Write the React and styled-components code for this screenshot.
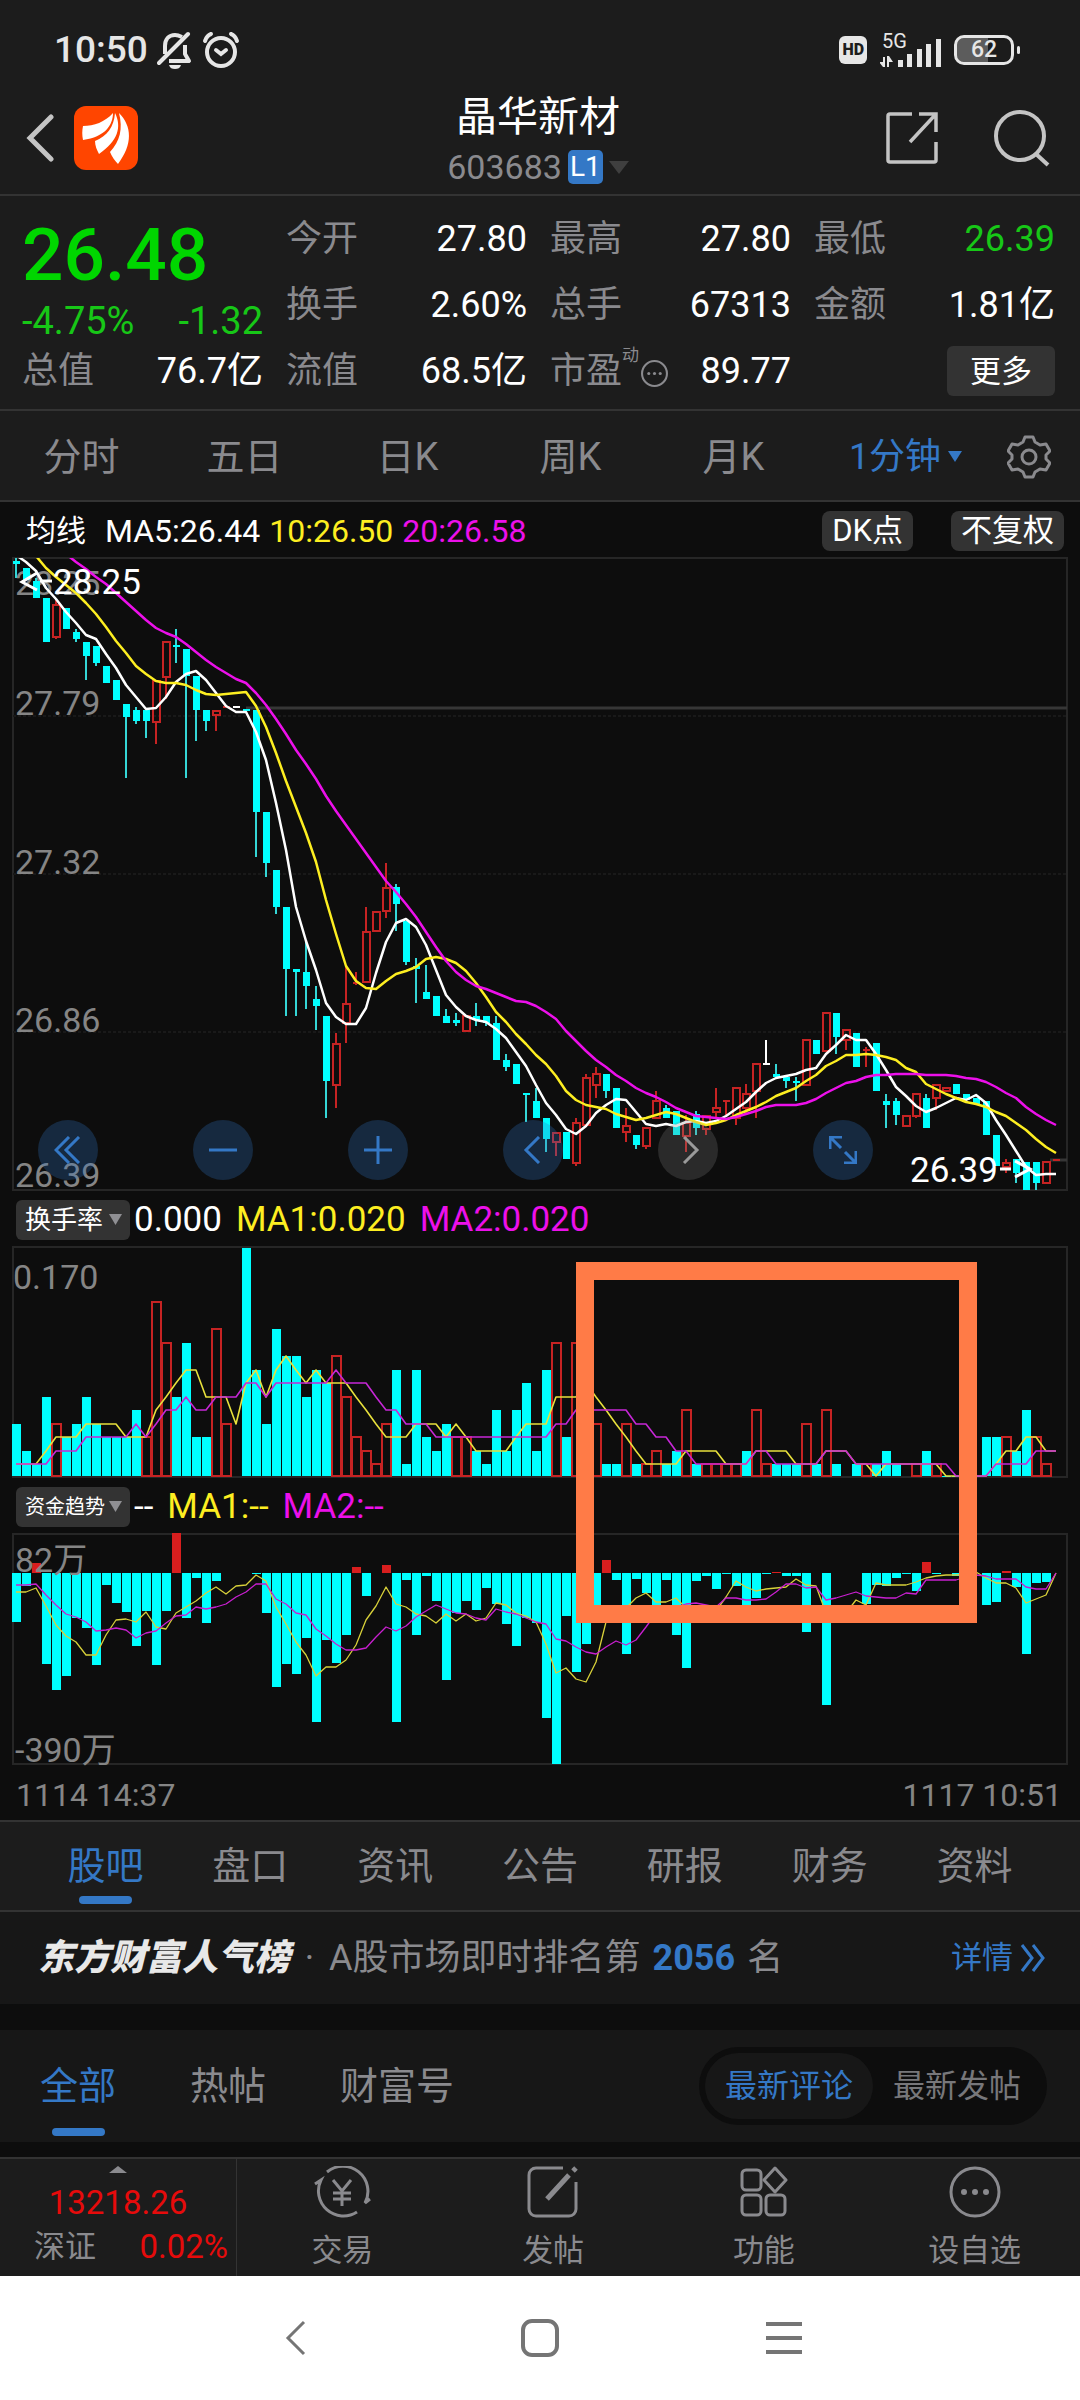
import React, { useState } from "react";
import styled, { createGlobalStyle } from "styled-components";

const C = {
  bar: "#1c1c1c",
  card: "#171717",
  ink: "#0d0d0d",
  line: "#333333",
  chip: "#333333",
  muted: "#8a8a8e",
  axis: "#858585",
  white: "#ffffff",
  green: "#00d600",
  greenSoft: "#17c717",
  red: "#e60b0b",
  blue: "#3478c6",
  cyan: "#00ffff",
  cyanWick: "#35d6d6",
  candleRed: "#c62323",
  barRed: "#d81e1e",
  yellow: "#fdee21",
  magenta: "#ec10ea",
  mark: "#ff7b47",
};

const Global = createGlobalStyle`
  *, *::before, *::after { box-sizing: border-box; }
  body {
    margin: 0;
    background: #ffffff;
    font-family: Roboto, "Noto Sans CJK SC", sans-serif;
  }
  button, select { font-family: inherit; }
`;

const Page = styled.div`
  background: ${C.ink};
  color: ${C.white};
`;

const PlainButton = styled.button`
  display: inline-flex;
  align-items: center;
  justify-content: center;
  margin: 0;
  padding: 0;
  border: 0;
  background: none;
  color: inherit;
  line-height: 1;
  white-space: nowrap;
  cursor: pointer;
`;

/* ---------- status bar ---------- */

const StatusBar = styled.div`
  display: flex;
  align-items: center;
  justify-content: space-between;
  height: 92px;
  padding: 8px 60px 0 54px;
  background: ${C.bar};
  color: #e6e6e6;
`;

const StatusGroup = styled.div`
  display: flex;
  align-items: center;
  gap: ${(p) => p.$gap}px;
`;

const Clock = styled.time`
  font-size: 37px;
  font-weight: 500;
  line-height: 40px;
`;

const HdBadge = styled.span`
  padding: 0 3px;
  border-radius: 6px;
  background: #e6e6e6;
  color: ${C.bar};
  font-size: 16px;
  font-weight: 900;
  line-height: 28px;
`;

const Signal = styled.div`
  display: grid;
  width: 61px;
  height: 34px;
  font-size: 20px;
  line-height: 17px;

  > * { grid-area: 1 / 1; }
  span { padding-left: 2px; }
`;

const Battery = styled.div`
  display: flex;
  align-items: center;
  gap: 3px;

  &::after {
    content: "";
    width: 3px;
    height: 8px;
    border-radius: 2px;
    background: #e6e6e6;
  }
`;

const BatteryCell = styled.span`
  width: 60px;
  border: 3px solid #e6e6e6;
  border-radius: 10px;
  background: linear-gradient(90deg, #5c5c5c 0 58%, ${C.bar} 58%);
  background-clip: padding-box;
  font-size: 23px;
  font-weight: 500;
  line-height: 24px;
  text-align: center;
`;

/* ---------- header ---------- */

const Header = styled.header`
  display: grid;
  grid-template-columns: 1fr auto 1fr;
  align-items: center;
  height: 104px;
  padding: 0 30px 10px 26px;
  border-bottom: 2px solid ${C.line};
  background: ${C.bar};
`;

const HeaderSide = styled.div`
  display: flex;
  align-items: center;
  justify-content: ${(p) => (p.$end ? "flex-end" : "flex-start")};
  gap: ${(p) => (p.$end ? 56 : 20)}px;
  color: #c4c4c4;
`;

const TitleBlock = styled.div`
  display: grid;
  justify-items: center;
  gap: 12px;
  padding-top: 4px;
`;

const StockName = styled.h1`
  margin: 0;
  font-size: 41px;
  font-weight: 400;
  line-height: 42px;
`;

const StockCode = styled.button`
  display: flex;
  align-items: center;
  gap: 6px;
  padding: 0;
  border: 0;
  background: none;
  color: ${C.muted};
  font-size: 34px;
  line-height: 34px;
`;

const Level = styled.span`
  padding: 0 2px;
  border-radius: 5px;
  background: ${C.blue};
  color: ${C.white};
  font-size: 28px;
`;

/* ---------- quote ---------- */

const Quote = styled.section`
  display: grid;
  grid-template-columns: repeat(4, 1fr);
  column-gap: 23px;
  padding: 10px 25px 5px 22px;
  border-bottom: 2px solid ${C.line};
  background: ${C.bar};
`;

const QuoteColumn = styled.div`
  display: grid;
  grid-template-rows: ${(p) => (p.$lead ? "98px 34px 66px" : "repeat(3, 66px)")};
`;

const Price = styled.div`
  align-self: center;
  color: ${C.green};
  font-size: 73px;
  font-weight: 500;
  line-height: 80px;
`;

const Change = styled.div`
  display: flex;
  align-items: center;
  justify-content: space-between;
  color: ${C.greenSoft};
  font-size: 38px;
  line-height: 34px;
`;

const Stat = styled.div`
  display: flex;
  align-items: center;
  justify-content: space-between;
  color: ${(p) => p.$color || C.white};
  font-size: 36px;
  line-height: 40px;
`;

const StatLabel = styled.span`
  display: flex;
  align-items: center;
  color: ${C.muted};

  sup {
    align-self: flex-start;
    font-size: 17px;
    line-height: 8px;
  }

  svg { margin: 4px 0 0 2px; }
`;

const MoreButton = styled(PlainButton)`
  align-self: center;
  justify-self: end;
  height: 50px;
  padding: 0 23px;
  border-radius: 6px;
  background: ${C.chip};
  font-size: 31px;
`;

/* ---------- period tabs ---------- */

const PeriodTabs = styled.nav`
  display: grid;
  grid-template-columns: repeat(6, 163fr) 102fr;
  height: 91px;
  border-bottom: 2px solid ${C.line};
  background: ${C.bar};
`;

const PeriodTab = styled(PlainButton)`
  gap: 7px;
  padding: 2px 0 0 ${(p) => (p.$menu ? 18 : 0)}px;
  color: ${(p) => (p.$active ? C.blue : C.muted)};
  font-size: ${(p) => (p.$menu ? 36 : 38)}px;
`;

/* ---------- charts ---------- */

const Charts = styled.main`
  background: ${C.ink};
`;

const Legend = styled.div`
  display: flex;
  align-items: center;
  gap: ${(p) => p.$gap || 14}px;
  height: 55px;
  padding: 2px 16px 0;
  font-size: ${(p) => p.$size || 35}px;
  line-height: 40px;
  white-space: nowrap;
`;

const Reading = styled.span`
  color: ${(p) => p.$color || C.white};
`;

const LegendTitle = styled.span`
  margin: 0 10px;
  font-size: 30px;
`;

const LegendActions = styled.div`
  display: flex;
  gap: 38px;
  margin-left: auto;
`;

const Chip = styled(PlainButton)`
  height: 40px;
  padding: 0 10px;
  border-radius: 8px;
  background: ${C.chip};
  font-size: 31px;
`;

const Picker = styled.label`
  display: grid;
  grid-template-columns: 1fr 21px;
  align-items: center;
  width: 114px;
  margin-right: -10px;

  svg {
    grid-area: 1 / 2;
    pointer-events: none;
  }
`;

const PickerSelect = styled.select`
  grid-area: 1 / 1 / 2 / 3;
  width: 100%;
  height: 40px;
  padding: 0 0 0 ${(p) => (p.$tight ? 9 : 9)}px;
  border: 0;
  border-radius: 6px;
  background: ${C.chip};
  color: ${C.white};
  font-size: ${(p) => (p.$tight ? 20 : 26)}px;
  appearance: none;
`;

const Stage = styled.div`
  position: relative;
  margin: 0 12px;

  > svg {
    display: block;
    width: 100%;
    height: auto;
    overflow: visible;
  }
`;

const Controls = styled.div`
  position: absolute;
  bottom: 11px;
  left: 26px;
  display: flex;
  gap: 95px;
`;

const RoundButton = styled(PlainButton)`
  width: 60px;
  height: 60px;
  border-radius: 50%;
  background: ${(p) => (p.$off ? "rgba(133, 133, 133, 0.25)" : "rgba(47, 116, 195, 0.28)")};
  color: ${(p) => (p.$off ? "#9a9a9a" : "#3478c6")};
`;

const Indicators = styled.div`
  position: relative;
`;

const Highlight = styled.div`
  position: absolute;
  top: 71px;
  left: 576px;
  width: 401px;
  height: 361px;
  border: 18px solid ${C.mark};
  pointer-events: none;
`;

const DateRow = styled.div`
  display: flex;
  align-items: center;
  justify-content: space-between;
  height: 55px;
  padding: 4px 18px 0 16px;
  color: ${C.axis};
  font-size: 32px;
`;

const AxisText = styled.text`
  fill: ${(p) => p.$fill || C.axis};
  font-size: ${(p) => p.$size || 34}px;
`;

/* ---------- sections below the charts ---------- */

const SectionTabs = styled.nav`
  display: grid;
  grid-template-columns: repeat(7, 1fr);
  height: 92px;
  padding: 0 33px;
  border-top: 2px solid ${C.line};
  border-bottom: 2px solid ${C.line};
  background: ${C.bar};
`;

const UnderlineTab = styled(PlainButton)`
  flex-direction: column;
  justify-content: flex-end;
  gap: ${(p) => p.$gap}px;
  padding-bottom: 6px;
  color: ${(p) => (p.$active ? C.blue : C.muted)};
  font-size: 38px;

  &::after {
    content: "";
    width: 53px;
    height: 8px;
    border-radius: 4px;
    background: ${(p) => (p.$active ? C.blue : "transparent")};
  }
`;

const RankBar = styled.section`
  display: flex;
  align-items: center;
  height: 92px;
  padding: 0 35px 0 38px;
  background: ${C.card};
  color: ${C.muted};
  font-size: 36px;
  line-height: 40px;
  white-space: nowrap;
`;

const RankTitle = styled.strong`
  color: #e8e8e8;
  font-style: italic;
  font-weight: 900;
`;

const Dot = styled.span`
  width: 39px;
  text-align: center;
`;

const RankNumber = styled.b`
  margin: 0 12px;
  color: ${C.blue};
`;

const DetailLink = styled.a`
  display: flex;
  align-items: center;
  gap: 7px;
  margin-left: auto;
  color: ${C.blue};
  font-size: 31px;
  text-decoration: none;
`;

const PostFilter = styled.section`
  display: flex;
  gap: 74px;
  height: 112px;
  margin: 26px 0 15px;
  padding: 0 33px 0 40px;
  background: ${C.card};
`;

const Toggle = styled.div`
  display: flex;
  align-self: center;
  margin-left: auto;
  padding: 6px;
  border-radius: 40px;
  background: ${C.ink};
`;

const ToggleButton = styled(PlainButton)`
  height: 66px;
  padding: 0 20px;
  border-radius: 33px;
  background: ${(p) => (p.$active ? C.card : "transparent")};
  color: ${(p) => (p.$active ? C.blue : "#77777a")};
  font-size: 32px;
`;

/* ---------- bottom ---------- */

const BottomBar = styled.nav`
  display: grid;
  grid-template-columns: 237px repeat(4, 1fr);
  height: 119px;
  border-top: 2px solid ${C.line};
  background: ${C.bar};
  color: ${C.muted};
`;

const IndexCell = styled.button`
  display: flex;
  flex-direction: column;
  align-items: center;
  gap: 10px;
  padding: 7px 8px 0 34px;
  border: 0;
  border-right: 1px solid ${C.line};
  background: none;
  color: ${C.red};
  font-size: 33px;
  line-height: 34px;
`;

const IndexValue = styled.span`
  display: grid;
  justify-items: center;
  gap: 13px;
  margin-right: 26px;
`;

const IndexRow = styled.span`
  display: flex;
  justify-content: space-between;
  width: 100%;
`;

const IndexName = styled.span`
  color: ${C.muted};
  font-size: 31px;
`;

const NavItem = styled(PlainButton)`
  flex-direction: column;
  justify-content: flex-start;
  gap: 17px;
  padding-top: 7px;
  font-size: 31px;
`;

const SystemBar = styled.div`
  display: flex;
  align-items: center;
  justify-content: center;
  gap: 206px;
  height: 124px;
  background: ${C.white};
  color: #757575;
`;

/* ---------- drawings ---------- */

const Line = ({ w, h = w, box, sw = 3, children, ...rest }) => (
  <svg
    width={w}
    height={h}
    viewBox={box || `0 0 ${w} ${h}`}
    fill="none"
    stroke="currentColor"
    strokeWidth={sw}
    aria-hidden="true"
    {...rest}
  >
    {children}
  </svg>
);

const Triangle = ({ w, h, color, up }) => (
  <svg width={w} height={h} viewBox="0 0 10 10" preserveAspectRatio="none" aria-hidden="true">
    <path d={up ? "M0 10h10L5 0z" : "M0 0h10L5 10z"} fill={color} />
  </svg>
);

const BellOff = () => (
  <Line w={36} h={38} sw={4}>
    <path d="M8 23v-8C8 8 12 4 18 4c3 0 5 1 7 2M28 14v9l4 7H12" strokeLinejoin="round" />
    <path d="M2 32 31 3" strokeLinecap="round" />
    <path d="M12 34h12c-1 3-3 4-6 4s-5-1-6-4z" fill="currentColor" stroke="none" />
  </Line>
);

const Alarm = () => (
  <Line w={38} h={38} sw={4} strokeLinecap="round">
    <circle cx="19" cy="21" r="14" />
    <path d="M3 10c1-3 3-6 6-7M35 10c-1-3-3-6-6-7" />
    <path d="m14 19 5 4 5-4" />
  </Line>
);

const Bars = () => (
  <svg width="61" height="34" viewBox="0 0 61 34" aria-hidden="true">
    <g fill="#e6e6e6">
      <path d="M3 24h2v10H3L-1 29h4zM7 34V23h2l4 6h-4v5z" />
      <path d="M18 27h5v7h-5zM27 21h5v13h-5zM37 16h5v18h-5zM46 11h5v23h-5zM56 6h5v28h-5z" />
    </g>
  </svg>
);

const Logo = () => (
  <svg width="64" height="64" viewBox="0 0 64 64" role="img" aria-label="东方财富">
    <rect width="64" height="64" rx="12" fill="#ff4500" />
    <g fill="#ffffff">
      <path d="M9 20C20 20 31 16 39 7 39 19 31 31 9 34 8 29 8 25 9 20z" />
      <path d="M41 7c7 14 3 28-16 41-2-4-4-8-4-13C33 30 40 21 41 7z" />
      <path d="M45 7c13 13 14 31-1 51-3-3-6-7-8-12C46 35 49 23 45 7z" />
    </g>
  </svg>
);

const Gear = () => (
  <Line w={44} h={44} sw={3} strokeLinejoin="round">
    <path d="M18 2h8l2 5 5 3 6-1 4 7-4 4v4l4 4-4 7-6-1-5 3-2 5h-8l-2-5-5-3-6 1-4-7 4-4v-4l-4-4 4-7 6 1 5-3z" />
    <circle cx="22" cy="22" r="7" />
  </Line>
);

const Share = () => (
  <Line w={52} h={52} sw={3.5}>
    <path d="M26 2H4a2 2 0 0 0-2 2v44a2 2 0 0 0 2 2h44a2 2 0 0 0 2-2V30" />
    <path d="M33 2h17v18M50 2 24 30" />
  </Line>
);

const Search = () => (
  <Line w={56} h={58} sw={4}>
    <circle cx="26" cy="27" r="24" />
    <path d="m42 45 12 11" />
  </Line>
);

const TradeIcon = () => (
  <Line w={58} h={52}>
    <path d="M14 6a25 25 0 0 1 38 31l5-4M44 46A25 25 0 0 1 8 14l-6 4" />
    <path d="m20 14 9 11 9-11M29 25v15M20 27h18M20 33h18" />
  </Line>
);

const PostIcon = () => (
  <Line w={52} h={52}>
    <path d="M36 2H9a7 7 0 0 0-7 7v34a7 7 0 0 0 7 7h33a7 7 0 0 0 7-7V16" />
    <path d="M20 33 42 9M46 5l3-3" strokeWidth="5" />
  </Line>
);

const FeatureIcon = () => (
  <Line w={52} h={52}>
    <rect x="4" y="4" width="19" height="20" rx="4" />
    <rect x="4" y="29" width="19" height="20" rx="4" />
    <rect x="28" y="29" width="19" height="20" rx="4" />
    <path d="m37 2 11 12-11 12-11-12z" strokeLinejoin="round" />
  </Line>
);

const DotsCircle = ({ w, sw = 3 }) => (
  <Line w={w} box="0 0 52 52" sw={sw}>
    <circle cx="26" cy="26" r="24" />
    <g fill="currentColor" stroke="none">
      <circle cx="15" cy="26" r="3" />
      <circle cx="26" cy="26" r="3" />
      <circle cx="37" cy="26" r="3" />
    </g>
  </Line>
);

/* ---------- chart data ---------- */

const FIRST_X = 16;
const STEP = 10;
const xAt = (i) => FIRST_X + STEP * i;

// tone, high, body top, body bottom, low
const CANDLES = `
c 1 4 7 21|c 11 11 23 23|c 21 24 41 41|c 41 41 85 85|r 43 47 80 82|c 51 51 72 72|c 72 75 82 85
c 85 85 99 123|c 89 89 106 109|c 109 109 126 126|c 123 123 143 143|c 147 147 160 221|c 150 153 164 167
c 153 153 164 181|r 123 123 165 187|r 84 84 120 142|c 72 88 90 106|c 92 92 119 221|c 119 119 153 184
c 153 153 164 174|r 153 153 158 174|r 149 149 150 150|w 149 149 151 151|c 152 152 154 154|c 153 153 255 300
c 255 255 306 320|c 313 313 350 357|c 350 350 412 459|c 412 412 415 459|c 385 415 429 452|c 429 442 449 473
c 459 459 524 561|r 476 486 528 551|r 408 446 466 486|r 415 425 426 428|r 350 374 425 425|r 354 354 374 374
r 306 330 354 361|c 327 330 347 374|c 364 364 405 408|c 401 409 412 446|c 408 435 442 442|c 439 439 459 459
c 452 459 466 466|c 456 463 466 469|r 458 458 474 474|c 446 459 463 469|c 459 459 466 469|c 459 466 503 503
c 497 503 510 514|c 507 507 527 527|c 536 536 538 565|c 531 544 561 561|c 561 561 582 595|r 575 575 585 599
c 575 575 602 602|r 561 565 606 609|r 517 520 568 568|r 510 516 528 541|c 517 517 534 541|c 531 531 571 571
r 551 568 575 585|c 578 578 588 592|r 570 570 589 592|r 534 543 561 561|c 548 551 561 561|c 554 554 578 578
r 558 565 579 595|c 554 557 571 578|r 558 558 572 578|r 531 550 555 561|r 543 543 544 558|r 530 530 561 568
r 527 536 551 558|r 506 506 534 561|w 483 506 508 508|c 507 517 520 520|c 520 520 524 531|c 520 524 526 544
r 482 482 528 528|c 483 483 497 497|r 455 455 494 494|c 456 456 480 497|r 472 472 483 493|c 476 476 510 510
r 490 492 493 510|c 486 486 534 534|c 537 544 548 571|c 541 544 558 568|r 558 558 569 569|r 536 536 559 561
c 537 541 571 571|r 527 527 541 553|r 530 530 534 534|c 527 527 537 537|c 537 537 543 543|c 541 541 547 547
c 544 544 578 578|c 578 578 609 609|r 602 605 610 616|c 602 602 616 626|c 605 605 633 633|c 605 605 626 633
r 604 604 626 626|r 602 602 603 603`
  .trim()
  .split(/[|\n]/)
  .map((s) => {
    const [tone, ...v] = s.split(" ");
    return [tone, ...v.map(Number)];
  });

const nums = (s) => s.trim().split(/\s+/).map(Number);

const MA5 = nums(`-2 5 14 31 42 55 66 78 82 97 111 128 140 152 151 140 125 117 114 123 136 149 155 155 175 203 246 293
350 384 413 446 460 467 467 451 416 385 366 362 370 388 413 438 450 459 463 465 472 481 495 509 528 546 558 572 577
569 556 548 542 543 555 567 569 567 569 565 564 566 564 559 552 545 535 526 521 519 517 513 511 497 488 478 483 483
497 513 530 539 549 555 551 546 541 543 538 546 563 578 594 610 618 617 617`);

const MA10 = nums(`-20 -10 -1 11 20 28 36 46 57 70 84 96 109 117 124 126 126 128 133 137 138 137 136 135 149 170 196
224 250 276 305 343 377 409 424 431 432 424 417 414 410 402 400 402 406 414 426 440 455 465 477 487 498 507 519 534
543 548 550 552 557 560 563 561 558 555 557 561 565 568 566 563 558 554 550 545 539 535 531 524 518 509 504 498 498
497 498 500 503 511 515 527 532 537 541 545 547 550 555 559 566 573 582 590 596`);

const MA20 = nums(`-42 -34 -26 -18 -10 -3 5 12 20 27 36 45 54 63 71 76 80 87 95 103 110 116 122 126 136 148 162 177
193 207 222 239 254 268 282 296 310 324 335 347 360 375 390 404 415 423 429 432 436 440 444 445 449 455 462 474 484
494 503 510 518 524 531 536 540 545 551 555 559 560 561 562 560 557 554 550 548 548 548 546 542 536 531 526 524 520
518 518 517 517 517 518 518 518 519 521 522 525 530 536 541 550 557 563 568`);

const TURNOVER = `c4 c2 c1 c6 r4 c3 c4 c6 c4 c3 c3 c3 c5 r3 r13 r10 c6 c10 c3 c3 r11 r4 r0 c17 c8 c4 c11 c9 c9 c6 c8 c7
r9 r6 r3 r2 r1 r4 c8 c1 c8 c3 c2 c4 r3 r3 c2 c1 c5 c2 c5 c7 c2 c8 r10 c3 r10 r6 r4 c1 c1 r4 c1 r1 r2 c1 c2 r5 c1 r1
r1 r1 r1 c2 r5 r1 c1 c1 c1 r4 c1 r5 c1 r0 c1 r1 c1 c2 c1 r0 r1 c2 r1 c0 c0 c0 c0 c3 c3 r3 c2 c5 r3 r1 r0`
  .split(/\s+/)
  .map((s) => [s[0], Number(s.slice(1))]);

const TURN_MA1 = nums(`1 1 1 2 3 3 3 4 4 4 4 3 3 3 5 6 7 8 8 6 6 6 4 7 8 6 8 9 8 7 8 7 7 7 6 5 4 3 3 3 4 4 4 3 4 3 2
2 2 2 3 4 4 4 6 6 6 7 6 5 4 3 2 1 1 1 1 2 2 2 2 1 1 1 2 2 2 2 1 1 1 2 2 2 1 1 0 1 1 1 1 1 1 0 0 0 0 0 1 2 2 3 3 2 2`);

const TURN_MA2 = nums(`1 1 1 1 2 2 2 3 3 3 3 3 4 3 4 5 5 6 5 5 6 6 6 7 7 6 7 7 7 7 7 7 8 7 7 7 6 5 5 4 4 4 3 3 3 3 3
3 3 3 3 3 3 3 4 4 5 5 5 5 5 5 4 4 3 3 2 2 1 1 1 1 1 1 2 2 1 1 1 1 1 2 2 2 1 1 1 1 1 1 1 1 1 1 0 0 0 0 1 1 1 1 2 2 2`);

// distance from the zero line; negative values are inflow and rise above it
const FLOW = nums(`49 13 -10 91 117 103 45 55 92 12 30 39 73 38 92 38 -40 45 5 50 8 0 0 0 1 40 114 91 101 65 149 67 90
62 -6 23 0 -8 149 7 62 3 28 107 40 28 37 15 31 51 73 45 50 145 191 43 99 71 32 -13 7 81 6 20 32 7 62 95 8 3 16 1 13
32 25 1 -1 3 3 59 0 132 0 0 0 31 12 13 5 1 18 -11 1 0 3 0 0 32 29 -2 14 81 10 9 0`);

const FLOW_MA1 = nums(`19 19 15 33 52 63 69 82 82 62 47 46 49 39 54 56 40 34 28 20 14 21 13 12 2 8 34 51 69 82 103 94 94
87 72 47 33 14 31 34 41 43 50 41 48 41 48 45 30 32 40 43 49 71 100 95 106 109 89 49 40 35 25 20 29 29 25 35 40 44 38
24 8 14 18 16 15 14 6 12 13 40 42 40 27 32 10 12 12 12 9 5 3 2 2 1 -1 5 10 10 15 30 26 22 0`);

const FLOW_MA2 = nums(`12 12 11 22 32 41 44 49 58 57 55 57 65 60 58 50 43 42 34 36 34 31 24 19 11 11 26 31 40 42 56 63
71 77 77 75 64 54 58 53 44 38 32 36 40 41 45 47 36 39 41 45 49 51 66 68 74 79 81 74 68 72 67 54 40 35 34 31 30 32 34
25 25 27 27 26 19 11 11 15 14 27 25 22 19 23 24 25 25 20 21 7 7 7 7 4 2 3 6 6 6 14 16 16 0`);

const trace = (values, toY = (v) => v) => values.map((v, i) => `${xAt(i)},${toY(v)}`).join(" ");

const Trace = ({ values, toY, color, width }) => (
  <polyline points={trace(values, toY)} fill="none" stroke={color} strokeWidth={width} strokeLinejoin="round" />
);

const Candle = ({ i, tone, high, top, bottom, low }) => {
  const x = xAt(i);
  const hollow = tone === "r" && bottom - top > 3;
  const wick = { c: C.cyanWick, r: C.candleRed, w: C.white }[tone];
  const body = { c: C.cyan, r: C.candleRed, w: C.white }[tone];
  return (
    <g>
      {high < top && <rect x={x - 1} y={high} width="2" height={top - high} fill={wick} />}
      {low > bottom && <rect x={x - 1} y={bottom} width="2" height={low - bottom} fill={wick} />}
      {hollow ? (
        <rect x={x - 3} y={top + 1} width="7" height={bottom - top - 1} fill="none" stroke={body} strokeWidth="2" />
      ) : (
        <rect x={x - 3} y={top} width="7" height={Math.max(2, bottom - top)} fill={body} />
      )}
    </g>
  );
};

const PriceChart = () => (
  <svg viewBox="12 0 1056 634" role="img" aria-label="1分钟K线">
    <defs>
      <clipPath id="price-area">
        <rect x="12" y="1" width="1056" height="633" />
      </clipPath>
    </defs>
    <rect x="13" y="1" width="1054" height="632" fill="none" stroke="#262626" strokeWidth="2" />
    {[159, 317, 475].map((y) => (
      <path key={y} d={`M13 ${y}H1067`} stroke="#191919" strokeWidth="2" strokeDasharray="3 2" />
    ))}
    <path d="M246 151H1067M1050 603H1067" stroke="#363636" strokeWidth="3" />
    {[["28.25", 38], ["27.79", 158], ["27.32", 317], ["26.86", 475], ["26.39", 630]].map(([t, y]) => (
      <AxisText key={t} x="15" y={y}>{t}</AxisText>
    ))}
    <g clipPath="url(#price-area)">
      {CANDLES.map(([tone, high, top, bottom, low], i) => (
        <Candle key={i} i={i} tone={tone} high={high} top={top} bottom={bottom} low={low} />
      ))}
      <Trace values={MA5} color={C.white} width={2.5} />
      <Trace values={MA10} color={C.yellow} width={2.5} />
      <Trace values={MA20} color={C.magenta} width={2.5} />
    </g>
    <path d="M37 16 22 25l15 8M40 24h12M1000 612h11M1015 604l15 8-15 8" fill="none" stroke="#fff" strokeWidth="3" />
    <AxisText x="53" y="37" $size={35} $fill={C.white}>28.25</AxisText>
    <AxisText x="910" y="625" $size={35} $fill={C.white}>26.39</AxisText>
  </svg>
);

const TURN_BASE = 230;
const turnHeight = (u) => (u > 0 ? Math.round(u * 13.5) - 2 : 0);
const turnY = (u) => TURN_BASE - turnHeight(u);

const TurnoverChart = () => (
  <svg viewBox="12 0 1056 232" role="img" aria-label="换手率">
    <rect x="13" y="1" width="1054" height="230" fill="none" stroke="#262626" strokeWidth="2" />
    {TURNOVER.map(([tone, u], i) =>
      tone === "c" ? (
        <rect key={i} x={xAt(i) - 4} y={turnY(u)} width="9" height={Math.max(1, turnHeight(u))} fill={C.cyan} />
      ) : (
        <rect key={i} x={xAt(i) - 4} y={turnY(u)} width="9" height={turnHeight(u)} fill="none" stroke={C.candleRed} strokeWidth="2" />
      )
    )}
    <Trace values={TURN_MA1} toY={turnY} color="#e8e13c" width={1.6} />
    <Trace values={TURN_MA2} toY={turnY} color="#c627d6" width={1.6} />
    <AxisText x="13" y="43">0.170</AxisText>
  </svg>
);

const ZERO = 40;
const flowY = (v) => ZERO + v;

const FlowChart = () => (
  <svg viewBox="12 0 1056 232" role="img" aria-label="资金趋势">
    <rect x="13" y="1" width="1054" height="230" fill="none" stroke="#262626" strokeWidth="2" />
    {FLOW.map((v, i) => (
      <rect
        key={i}
        x={xAt(i) - 4}
        y={v < 0 ? ZERO + v : ZERO}
        width="9"
        height={Math.abs(v)}
        fill={v < 0 ? C.barRed : C.cyan}
      />
    ))}
    <Trace values={FLOW_MA1} toY={flowY} color="#d8d13a" width={1.3} />
    <Trace values={FLOW_MA2} toY={flowY} color="#c91fd0" width={1.3} />
    <AxisText x="15" y="39">82万</AxisText>
    <AxisText x="15" y="229">-390万</AxisText>
  </svg>
);

const IndicatorPicker = ({ label, options, tight }) => (
  <Picker>
    <PickerSelect aria-label={label} defaultValue={options[0]} $tight={tight}>
      {options.map((o) => (
        <option key={o}>{o}</option>
      ))}
    </PickerSelect>
    <Triangle w={13} h={11} color="#8f8f93" />
  </Picker>
);

/* ---------- page ---------- */

const QUOTES = [
  [["今开", "27.80"], ["换手", "2.60%"], ["流值", "68.5亿"]],
  [["最高", "27.80"], ["总手", "67313"], ["市盈", "89.77", null, true]],
  [["最低", "26.39", C.greenSoft], ["金额", "1.81亿"]],
];

const PERIODS = ["分时", "五日", "日K", "周K", "月K", "1分钟"];
const SECTIONS = ["股吧", "盘口", "资讯", "公告", "研报", "财务", "资料"];
const FILTERS = ["全部", "热帖", "财富号"];
const ORDERS = ["最新评论", "最新发帖"];

export default function App() {
  const [period, setPeriod] = useState("1分钟");
  const [section, setSection] = useState("股吧");
  const [filter, setFilter] = useState("全部");
  const [order, setOrder] = useState("最新评论");

  return (
    <>
      <Global />
      <Page>
        <StatusBar>
          <StatusGroup $gap={9}>
            <Clock>10:50</Clock>
            <BellOff />
            <Alarm />
          </StatusGroup>
          <StatusGroup $gap={13}>
            <HdBadge>HD</HdBadge>
            <Signal>
              <span>5G</span>
              <Bars />
            </Signal>
            <Battery>
              <BatteryCell>62</BatteryCell>
            </Battery>
          </StatusGroup>
        </StatusBar>

        <Header>
          <HeaderSide>
            <PlainButton aria-label="返回">
              <Line w={28} h={48} sw={5} strokeLinecap="round"><path d="M25 3 4 24l21 21" /></Line>
            </PlainButton>
            <Logo />
          </HeaderSide>
          <TitleBlock>
            <StockName>晶华新材</StockName>
            <StockCode>
              603683 <Level>L1</Level>
              <Triangle w={20} h={13} color="#3f3f3f" />
            </StockCode>
          </TitleBlock>
          <HeaderSide $end>
            <PlainButton aria-label="分享"><Share /></PlainButton>
            <PlainButton aria-label="搜索"><Search /></PlainButton>
          </HeaderSide>
        </Header>

        <Quote>
          <QuoteColumn $lead>
            <Price>26.48</Price>
            <Change><span>-4.75%</span><span>-1.32</span></Change>
            <Stat><StatLabel>总值</StatLabel><span>76.7亿</span></Stat>
          </QuoteColumn>
          {QUOTES.map((column, c) => (
            <QuoteColumn key={c}>
              {column.map(([label, value, color, note]) => (
                <Stat key={label} $color={color}>
                  <StatLabel>
                    {label}
                    {note && <sup>动</sup>}
                    {note && <DotsCircle w={27} sw={4} />}
                  </StatLabel>
                  <span>{value}</span>
                </Stat>
              ))}
              {column.length < 3 && <MoreButton>更多</MoreButton>}
            </QuoteColumn>
          ))}
        </Quote>

        <PeriodTabs>
          {PERIODS.map((p) => (
            <PeriodTab key={p} $menu={p === "1分钟"} $active={p === period} onClick={() => setPeriod(p)}>
              {p}
              {p === "1分钟" && <Triangle w={14} h={11} color={C.blue} />}
            </PeriodTab>
          ))}
          <PeriodTab aria-label="设置"><Gear /></PeriodTab>
        </PeriodTabs>

        <Charts>
          <Legend $size={32} $gap={9}>
            <LegendTitle>均线</LegendTitle>
            <Reading>MA5:26.44</Reading>
            <Reading $color={C.yellow}>10:26.50</Reading>
            <Reading $color={C.magenta}>20:26.58</Reading>
            <LegendActions>
              <Chip>DK点</Chip>
              <Chip>不复权</Chip>
            </LegendActions>
          </Legend>
          <Stage>
            <PriceChart />
            <Controls>
              <RoundButton aria-label="最早">
                <Line w={28} sw={3}><path d="M15 1 2 14l13 13M25 1 12 14l13 13" /></Line>
              </RoundButton>
              <RoundButton aria-label="缩小">
                <Line w={28} sw={3}><path d="M0 14h28" /></Line>
              </RoundButton>
              <RoundButton aria-label="放大">
                <Line w={28} sw={3}><path d="M0 14h28M14 0v28" /></Line>
              </RoundButton>
              <RoundButton aria-label="向前">
                <Line w={28} sw={3}><path d="M20 1 7 14l13 13" /></Line>
              </RoundButton>
              <RoundButton aria-label="向后" $off>
                <Line w={28} sw={3}><path d="m10 1 13 13-13 13" /></Line>
              </RoundButton>
              <RoundButton aria-label="全屏">
                <Line w={28} sw={3}><path d="M1 13V1h12M1 1l11 11M27 15v12H15M27 27 16 16" /></Line>
              </RoundButton>
            </Controls>
          </Stage>

          <Indicators>
            <Legend>
              <IndicatorPicker label="副图一" options={["换手率", "成交量"]} />
              <Reading>0.000</Reading>
              <Reading $color={C.yellow}>MA1:0.020</Reading>
              <Reading $color={C.magenta}>MA2:0.020</Reading>
            </Legend>
            <Stage><TurnoverChart /></Stage>
            <Legend>
              <IndicatorPicker label="副图二" options={["资金趋势", "主力净流"]} tight />
              <Reading>--</Reading>
              <Reading $color={C.yellow}>MA1:--</Reading>
              <Reading $color={C.magenta}>MA2:--</Reading>
            </Legend>
            <Stage><FlowChart /></Stage>
            <Highlight />
          </Indicators>
          <DateRow>
            <time>1114 14:37</time>
            <time>1117 10:51</time>
          </DateRow>
        </Charts>

        <SectionTabs>
          {SECTIONS.map((s) => (
            <UnderlineTab key={s} $gap={11} $active={s === section} onClick={() => setSection(s)}>
              {s}
            </UnderlineTab>
          ))}
        </SectionTabs>

        <RankBar>
          <RankTitle>东方财富人气榜</RankTitle>
          <Dot>·</Dot>
          <span>A股市场即时排名第</span>
          <RankNumber>2056</RankNumber>
          <span>名</span>
          <DetailLink href="#rank">
            详情
            <Line w={25} h={28} sw={3}><path d="m2 1 10 13L2 27M13 1l10 13-10 13" /></Line>
          </DetailLink>
        </RankBar>

        <PostFilter>
          {FILTERS.map((f) => (
            <UnderlineTab key={f} $gap={23} $active={f === filter} onClick={() => setFilter(f)}>
              {f}
            </UnderlineTab>
          ))}
          <Toggle>
            {ORDERS.map((o) => (
              <ToggleButton key={o} aria-pressed={o === order} $active={o === order} onClick={() => setOrder(o)}>
                {o}
              </ToggleButton>
            ))}
          </Toggle>
        </PostFilter>

        <BottomBar>
          <IndexCell>
            <IndexValue>
              <Triangle w={18} h={7} color="#8a8a8e" up />
              13218.26
            </IndexValue>
            <IndexRow>
              <IndexName>深证</IndexName>
              0.02%
            </IndexRow>
          </IndexCell>
          <NavItem><TradeIcon />交易</NavItem>
          <NavItem><PostIcon />发帖</NavItem>
          <NavItem><FeatureIcon />功能</NavItem>
          <NavItem><DotsCircle w={52} />设自选</NavItem>
        </BottomBar>

        <SystemBar>
          <PlainButton aria-label="返回上一页">
            <Line w={38} h={36} sw={3}><path d="M27 2 11 18l16 16" /></Line>
          </PlainButton>
          <PlainButton aria-label="主屏幕">
            <Line w={38} h={38} sw={4}><rect x="2" y="2" width="34" height="34" rx="9" /></Line>
          </PlainButton>
          <PlainButton aria-label="最近任务">
            <Line w={38} h={36} sw={4}><path d="M1 4h36M1 18h36M1 32h36" /></Line>
          </PlainButton>
        </SystemBar>
      </Page>
    </>
  );
}
